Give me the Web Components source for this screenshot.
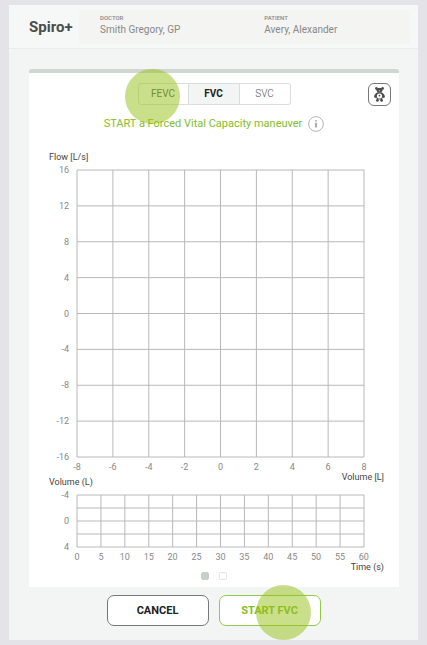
<!DOCTYPE html>
<html lang="en">
<head>
<meta charset="utf-8">
<meta name="viewport" content="width=device-width, initial-scale=1">
<title>Spiro+</title>
<style>
  body{
    margin:5px 9px 6px;
    background:#E4E3E8;
    font-family:Roboto, "Liberation Sans", sans-serif;
    color:#555;
  }
</style>
</head>
<body>

<spiro-app>
  <spiro-header slot="header">
    Spiro+
    <spiro-person slot="people" label="DOCTOR">Smith Gregory, GP</spiro-person>
    <spiro-person slot="people" label="PATIENT">Avery, Alexander</spiro-person>
  </spiro-header>

  <spiro-card>
    <spiro-toolbar></spiro-toolbar>
    <spiro-message>START a Forced Vital Capacity maneuver</spiro-message>
    <spiro-chart class="flow" ytitle="Flow [L/s]" xtitle="Volume [L]"
      yticks="16 12 8 4 0 -4 -8 -12 -16" xticks="-8 -6 -4 -2 0 2 4 6 8" rows="8"></spiro-chart>
    <spiro-chart class="volume" ytitle="Volume (L)" xtitle="Time (s)"
      yticks="-4 0 4" xticks="0 5 10 15 20 25 30 35 40 45 50 55 60" rows="4"></spiro-chart>
    <spiro-pager></spiro-pager>
  </spiro-card>

  <spiro-button slot="actions">CANCEL</spiro-button>
  <spiro-button slot="actions" primary>START FVC<touch-spot slot="spot"></touch-spot></spiro-button>
</spiro-app>

<script>
// shared helper: open shadow root with the given markup
function render(el, html){
  el.attachShadow({ mode:"open" }).innerHTML = html;
}

class SpiroApp extends HTMLElement {
  constructor(){
    super();
    render(this, `
      <style>
        :host{ display:block; background:#F3F5F5; }
        main{ padding:20px 19px 0 20px; }
        footer{
          display:flex;
          justify-content:center;
          gap:10px;
          padding:8px 0 14px;
        }
      </style>
      <slot name="header"></slot>
      <main><slot></slot></main>
      <footer><slot name="actions"></slot></footer>
    `);
  }
}

class SpiroHeader extends HTMLElement {
  constructor(){
    super();
    render(this, `
      <style>
        :host{ display:block; }
        header{
          display:flex;
          align-items:center;
          padding:5px 8px 4px 20px;
          border-bottom:1px solid #EBEDED;
          background:#F6F8F8;
        }
        h1{
          flex:none;
          width:50px;
          margin:0;
          font-size:15px;
          line-height:20px;
          font-weight:bold;
          color:#4A4D4B;
          white-space:nowrap;
        }
        .people{
          flex:1;
          display:grid;
          grid-template-columns:53fr 47fr;
          padding:4px 0 6px 21px;
          background:#F4F4F3;
        }
      </style>
      <header>
        <h1><slot></slot></h1>
        <div class="people"><slot name="people"></slot></div>
      </header>
    `);
  }
}

class SpiroPerson extends HTMLElement {
  constructor(){
    super();
    render(this, `
      <style>
        :host{ display:block; white-space:nowrap; }
        .label{ font-size:6px; line-height:8px; font-weight:500; color:#888; }
        .name{ font-size:10px; line-height:16px; color:#888; }
      </style>
      <div class="label">${this.getAttribute("label")}</div>
      <div class="name"><slot></slot></div>
    `);
  }
}

class SpiroCard extends HTMLElement {
  constructor(){
    super();
    render(this, `
      <style>
        :host{
          display:block;
          padding:10px 8px 7px;
          border-top:4px solid #D0D6D0;
          border-radius:3px 3px 0 0;
          background:#FFF;
        }
        ::slotted(spiro-chart){ margin:0 7px 0 12px; }
        ::slotted(.flow){ --ratio:1 / 1; margin-top:20px; }
        ::slotted(.volume){ --ratio:287 / 52; margin-top:-5px; }
      </style>
      <slot></slot>
    `);
  }
}

// translucent dot which marks where to tap
class TouchSpot extends HTMLElement {
  constructor(){
    super();
    render(this, `
      <style>
        :host{
          position:absolute;
          top:var(--spot-y, 50%);
          left:var(--spot-x, 50%);
          width:55px;
          height:55px;
          margin:-28px 0 0 -28px;
          border-radius:50%;
          background:rgba(150, 191, 20, .5);
          pointer-events:none;
        }
      </style>
    `);
  }
}

class SpiroToolbar extends HTMLElement {
  constructor(){
    super();
    render(this, `
      <style>
        :host{
          display:grid;
          grid-template-columns:1fr auto 1fr;
          align-items:start;
        }
        .tabs{
          grid-column:2;
          display:grid;
          grid-template-columns:repeat(3, 51px);
        }
        .tabs button{
          position:relative;
          height:22px;
          padding:0;
          border:1px solid #DCDEDE;
          border-left-width:0;
          background:#FFF;
          font:300 10px/20px Roboto, sans-serif;
          color:#555;
        }
        .tabs button:first-child{
          border-left-width:1px;
          border-radius:3px 0 0 3px;
          font-weight:normal;
          --spot-x:14px;
          --spot-y:13px;
        }
        .tabs button:last-child{ border-radius:0 3px 3px 0; }
        .tabs button[aria-selected="true"]{
          background:#F3F5F5;
          font-weight:bold;
          color:#222;
        }
        .bear{
          justify-self:end;
          width:23px;
          height:23px;
          padding:0;
          display:grid;
          place-items:center;
          border:1px solid #777;
          border-radius:6px;
          background:#FFF;
        }
        svg{ display:block; }
      </style>
      <div class="tabs" role="tablist">
        <button role="tab" aria-selected="false">FEVC<touch-spot></touch-spot></button>
        <button role="tab" aria-selected="true">FVC</button>
        <button role="tab" aria-selected="false">SVC</button>
      </div>
      <button class="bear" aria-label="Child mode">
        <svg width="13" height="17" viewBox="0 0 13 17" fill="#4A4A4A">
          <circle cx="3.4" cy="2.4" r="1.3"/>
          <circle cx="9.6" cy="2.4" r="1.3"/>
          <path d="M3.2 2.6C4 1.9 9 1.9 9.8 2.6L9.4 5C8.8 6.8 4.2 6.8 3.6 5Z"/>
          <path d="M4.4 6.2C2.6 7.2 1 9 1.1 10.8C1.3 12.2 2.5 12.1 3.2 11.4C3.6 13 4.8 13.5 6.5 13.5S9.4 13 9.8 11.4C10.5 12.1 11.7 12.2 11.9 10.8C12 9 10.4 7.2 8.6 6.2Z"/>
          <circle cx="4.4" cy="14.4" r="1.4"/>
          <circle cx="8.6" cy="14.4" r="1.4"/>
          <ellipse cx="6.5" cy="10" rx="2.6" ry="2.6" fill="#FFF"/>
          <circle cx="6.5" cy="9.6" r=".9"/>
          <path d="M5.6 4.6H7.4L6.5 5.5Z" fill="#FFF"/>
        </svg>
      </button>
    `);
  }
}

class SpiroMessage extends HTMLElement {
  constructor(){
    super();
    render(this, `
      <style>
        :host{
          display:flex;
          justify-content:center;
          align-items:center;
          gap:6px;
          margin-top:10px;
          font-size:11px;
          line-height:16px;
          color:#84BD27;
        }
        button{
          flex:none;
          width:16px;
          height:16px;
          padding:0;
          border:0;
          background:none;
        }
        svg{ display:block; }
      </style>
      <span><slot></slot></span>
      <button aria-label="Information">
        <svg width="16" height="16" viewBox="0 0 16 16" fill="none" stroke="#AAA">
          <circle cx="8" cy="8" r="7.4" stroke-width=".9"/>
          <path d="M8 4.2V5.4M8 6.8V11.6" stroke="#777" stroke-width="1.2"/>
        </svg>
      </button>
    `);
  }
}

class SpiroChart extends HTMLElement {
  constructor(){
    super();
    const xticks = this.getAttribute("xticks").split(" ");
    const yticks = this.getAttribute("yticks").split(" ");
    const rows = Number(this.getAttribute("rows"));
    const cols = xticks.length - 1;
    const spans = list => list.map(t => `<span>${t}</span>`).join("");

    let lines = "";
    for (let i = 0; i <= cols; i++) {
      const x = 100 * i / cols + "%";
      lines += `<line x1="${x}" x2="${x}" y1="0" y2="100%"/>`;
    }
    for (let i = 0; i <= rows; i++) {
      const y = 100 * i / rows + "%";
      lines += `<line x1="0" x2="100%" y1="${y}" y2="${y}"/>`;
    }

    render(this, `
      <style>
        :host{ display:block; font-size:9px; line-height:10px; color:#888; }
        .title{ color:#444; }
        .title.x{ text-align:right; }
        .plot{
          display:grid;
          grid-template-columns:20px 1fr;
          column-gap:8px;
          row-gap:5px;
          margin:8px 20px 0 0;
        }
        svg{
          display:block;
          width:100%;
          aspect-ratio:var(--ratio);
          overflow:visible;
          stroke:#B8B8B8;
        }
        .yticks, .xticks{
          display:flex;
          justify-content:space-between;
        }
        .yticks{ flex-direction:column; }
        .yticks span{
          display:flex;
          height:0;
          justify-content:flex-end;
          align-items:center;
        }
        .xticks{ grid-column:2; }
        .xticks span{
          display:flex;
          width:0;
          justify-content:center;
        }
      </style>
      <div class="title">${this.getAttribute("ytitle")}</div>
      <div class="plot">
        <div class="yticks">${spans(yticks)}</div>
        <svg aria-hidden="true">${lines}</svg>
        <div class="xticks">${spans(xticks)}</div>
      </div>
      <div class="title x">${this.getAttribute("xtitle")}</div>
    `);
  }
}

class SpiroPager extends HTMLElement {
  constructor(){
    super();
    render(this, `
      <style>
        :host{ display:flex; justify-content:center; gap:10px; }
        button{
          width:8px;
          height:8px;
          padding:0;
          border:1px solid #E4E6E4;
          border-radius:2px;
          background:#FFF;
        }
        button[aria-current]{ border-color:#C8CEC8; background:#C8CEC8; }
      </style>
      <button aria-label="Page 1" aria-current="true"></button>
      <button aria-label="Page 2"></button>
    `);
  }
}

class SpiroButton extends HTMLElement {
  constructor(){
    super();
    render(this, `
      <style>
        :host{ display:block; }
        button{
          position:relative;
          width:102px;
          height:31px;
          padding:0;
          border:1px solid #777;
          border-radius:7px;
          background:#FFF;
          font:bold 11px/16px Roboto, sans-serif;
          color:#222;
        }
        :host([primary]) button{
          border-color:#93C94A;
          color:#84BD27;
          --spot-x:64px;
          --spot-y:17px;
        }
      </style>
      <button><slot></slot><slot name="spot"></slot></button>
    `);
  }
}

customElements.define("spiro-app", SpiroApp);
customElements.define("spiro-header", SpiroHeader);
customElements.define("spiro-person", SpiroPerson);
customElements.define("spiro-card", SpiroCard);
customElements.define("touch-spot", TouchSpot);
customElements.define("spiro-toolbar", SpiroToolbar);
customElements.define("spiro-message", SpiroMessage);
customElements.define("spiro-chart", SpiroChart);
customElements.define("spiro-pager", SpiroPager);
customElements.define("spiro-button", SpiroButton);
</script>
</body>
</html>
